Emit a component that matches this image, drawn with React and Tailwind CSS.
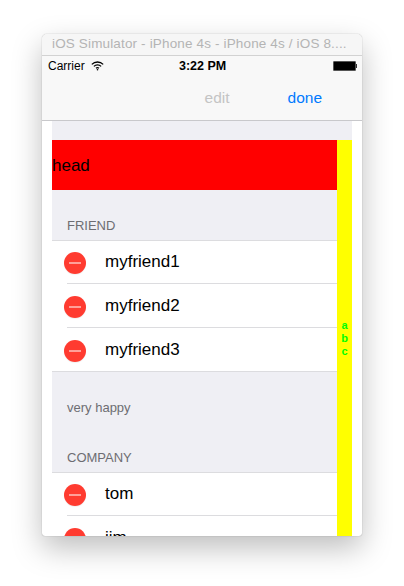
const sans = { fontFamily: '"Liberation Sans", Arial, sans-serif' };

function Row({ name, sep, h = "h-11" }) {
  return (
    <div className={`relative ${h} bg-white flex items-start shrink-0`}>
      <div className="ml-3 mt-[11px] w-[22px] h-[22px] rounded-full bg-[#ff3b30] flex items-center justify-center shrink-0 shadow-[0_1px_1px_rgba(0,0,0,0.06)]">
        <div className="w-[12px] h-[2px] bg-[#ff9f99]" />
      </div>
      <span className="ml-[19px] mt-[10px] text-[17px] text-black leading-[22px] whitespace-nowrap">{name}</span>
      {sep && <div className="absolute bottom-px left-[15px] right-0 h-px bg-[#dcdcdf]" />}
    </div>
  );
}

function Header({ children, h }) {
  return (
    <div className={`${h} bg-[#efeff4] flex items-end pl-[15px] pb-[6px] shrink-0`}>
      <span className="text-[13px] leading-4 text-[#6d6d72]">{children}</span>
    </div>
  );
}

export default function App() {
  return (
    <div className="w-[404px] h-[586px] bg-white pt-[34px] pl-[42px] overflow-hidden" style={sans}>
      <div className="w-[320px] h-[502px] rounded-t-[5px] rounded-b-[3px] bg-white flex flex-col overflow-hidden shadow-[0_12px_30px_rgba(0,0,0,0.26),0_0_1px_rgba(0,0,0,0.45)]">
        <div className="h-[22px] shrink-0 bg-[#f6f6f6] border-b border-[#d2d2d2] pl-[10px] flex items-center text-[13.5px] tracking-[0.15px] text-[#b4b4b4] whitespace-nowrap">
          iOS Simulator - iPhone 4s - iPhone 4s / iOS 8....
        </div>
        <div className="h-[65px] shrink-0 bg-[#f8f8f8] border-b border-[#c8c8cb] flex flex-col">
          <div className="relative h-5 flex items-center justify-between pl-[6px] pr-[5px] text-[12px] text-black">
            <div className="flex items-center gap-[6px]">
              <span>Carrier</span>
              <svg width="13" height="10" viewBox="0 0 13 10" fill="none" stroke="black" strokeWidth="1.3">
                <path d="M0.8 3.4 A8 8 0 0 1 12.2 3.4" />
                <path d="M2.9 5.4 A5 5 0 0 1 10.1 5.4" />
                <path d="M5 7.3 A2.2 2.2 0 0 1 8 7.3" />
                <circle cx="6.5" cy="8.8" r="0.8" fill="black" stroke="none" />
              </svg>
            </div>
            <span className="absolute left-[137px] font-bold text-[12.5px]">3:22 PM</span>
            <div className="flex items-center">
              <div className="w-[23px] h-[10px] bg-black border border-[#555] rounded-[1px]" />
              <div className="w-[1.5px] h-[4px] bg-[#333]" />
            </div>
          </div>
          <div className="flex-1 relative flex items-center justify-end pr-10 gap-[58px] text-[15.5px]">
            <span className="text-[#c4c4c4]">edit</span>
            <span className="text-[#007aff]">done</span>
          </div>
        </div>
        <div className="flex-1 min-h-0 mx-[10px] flex flex-col overflow-hidden bg-[#efeff4]">
          <div className="h-[19px] shrink-0" />
          <div className="flex-1 min-h-0 flex">
            <div className="w-[285px] flex flex-col overflow-hidden">
              <div className="h-[50px] shrink-0 bg-[#ff0000] flex items-center pt-[2px] text-[17px] text-black">head</div>
              <Header h="h-[50px]">FRIEND</Header>
              <div className="shrink-0 border-y border-[#dcdcdf] bg-white">
                <Row name="myfriend1" sep />
                <Row name="myfriend2" sep />
                <Row name="myfriend3" h="h-[42px]" />
              </div>
              <div className="h-[70px] shrink-0 flex items-center pl-[15px] pt-[2px] text-[13px] text-[#6d6d72]">very happy</div>
              <Header h="h-[30px]">COMPANY</Header>
              <div className="shrink-0 border-t border-[#dcdcdf] bg-white">
                <Row name="tom" sep />
                <Row name="jim" />
              </div>
            </div>
            <div className="w-[15px] bg-[#ffff00] flex flex-col items-center justify-center text-[#00ff00] font-bold text-[11px] leading-[13px]">
              <span>a</span>
              <span>b</span>
              <span>c</span>
            </div>
          </div>
        </div>
      </div>
    </div>
  );
}
